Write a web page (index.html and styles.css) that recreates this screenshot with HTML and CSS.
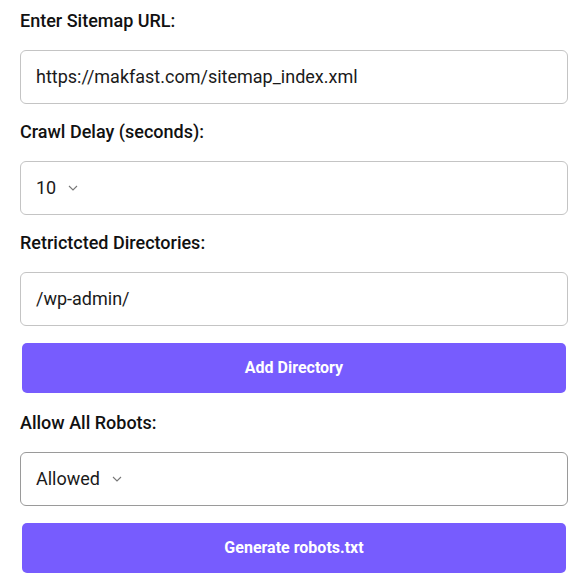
FILE: index.html
```html
<!DOCTYPE html>
<html lang="en">
<head>
<meta charset="utf-8">
<title>Robots.txt Generator</title>
<link rel="stylesheet" href="styles.css">
</head>
<body>
<form class="form">
  <label class="label">Enter Sitemap URL:</label>
  <div class="field">https://makfast.com/sitemap_index.xml</div>

  <label class="label">Crawl Delay (seconds):</label>
  <div class="field">10<svg class="chev" width="10" height="6" viewBox="0 0 10 6"><path d="M1 1 L5 5 L9 1" fill="none" stroke="#777" stroke-width="1.1"/></svg></div>

  <label class="label">Retrictcted Directories:</label>
  <div class="field">/wp-admin/</div>

  <button type="button" class="btn">Add Directory</button>

  <label class="label label-after-btn">Allow All Robots:</label>
  <div class="field field-dark">Allowed<svg class="chev" width="10" height="6" viewBox="0 0 10 6"><path d="M1 1 L5 5 L9 1" fill="none" stroke="#777" stroke-width="1.1"/></svg></div>

  <button type="button" class="btn">Generate robots.txt</button>
</form>
</body>
</html>
```

FILE: styles.css
```css
html, body {
  margin: 0;
  padding: 0;
  background: #ffffff;
}

body {
  font-family: Roboto, "Liberation Sans", sans-serif;
  color: #111;
}

.form {
  display: flex;
  flex-direction: column;
  padding: 10px 20px 0 20px;
}

.label {
  display: block;
  font-size: 18px;
  font-weight: 500;
  line-height: 21px;
  margin-bottom: 19px;
  color: #111;
}

.field {
  box-sizing: border-box;
  height: 54px;
  border: 1px solid #c4c4c4;
  border-radius: 6px;
  padding: 0 15px 2px 15px;
  display: flex;
  align-items: center;
  font-size: 18px;
  color: #1a1a1a;
  margin-bottom: 17px;
}

.field-dark {
  border-color: #9a9a9a;
}

.chev {
  margin-left: 12px;
  margin-top: 2px;
}

.btn {
  box-sizing: border-box;
  height: 50px;
  margin: 0 2px 19px 2px;
  padding: 0 0 2px 0;
  border: none;
  border-radius: 5px;
  background: #775cfe;
  color: #ffffff;
  font-family: Roboto, "Liberation Sans", sans-serif;
  font-size: 16px;
  font-weight: 700;
}
```
